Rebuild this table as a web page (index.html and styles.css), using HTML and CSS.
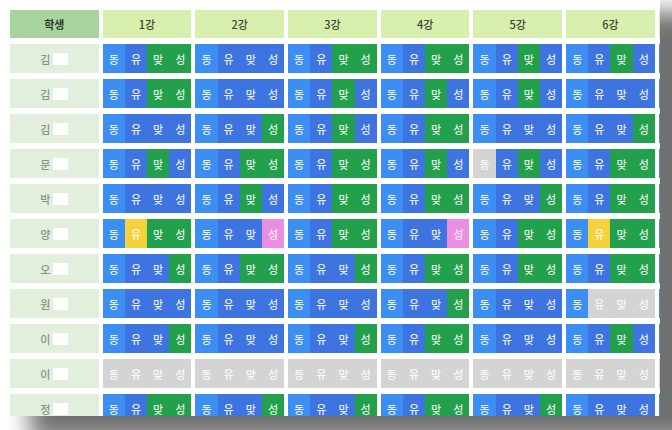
FILE: index.html
```html
<!DOCTYPE html>
<html lang="ko">
<head>
<meta charset="utf-8">
<title>출석</title>
<link rel="stylesheet" href="styles.css">
</head>
<body>
<div class="card">
<div class="grid">
<div class="hs">학생</div><div class="hl">1강</div><div class="hl">2강</div><div class="hl">3강</div><div class="hl">4강</div><div class="hl">5강</div><div class="hl">6강</div><div class="hl"></div>

<div class="nm">김<span class="mask"></span></div>
<div class="c"><i class="b1">동</i><i class="b">유</i><i class="g">맞</i><i class="g">성</i></div>
<div class="c"><i class="b1">동</i><i class="b">유</i><i class="b">맞</i><i class="b">성</i></div>
<div class="c"><i class="b1">동</i><i class="b">유</i><i class="g">맞</i><i class="g">성</i></div>
<div class="c"><i class="b1">동</i><i class="b">유</i><i class="g">맞</i><i class="g">성</i></div>
<div class="c"><i class="b1">동</i><i class="b">유</i><i class="g">맞</i><i class="b">성</i></div>
<div class="c"><i class="b1">동</i><i class="b">유</i><i class="g">맞</i><i class="b">성</i></div>
<div class="c"><i class="b1"></i><i class="b"></i><i class="b"></i><i class="b"></i></div>

<div class="nm">김<span class="mask"></span></div>
<div class="c"><i class="b1">동</i><i class="b">유</i><i class="g">맞</i><i class="g">성</i></div>
<div class="c"><i class="b1">동</i><i class="b">유</i><i class="b">맞</i><i class="b">성</i></div>
<div class="c"><i class="b1">동</i><i class="b">유</i><i class="g">맞</i><i class="b">성</i></div>
<div class="c"><i class="b1">동</i><i class="b">유</i><i class="g">맞</i><i class="b">성</i></div>
<div class="c"><i class="b1">동</i><i class="b">유</i><i class="g">맞</i><i class="b">성</i></div>
<div class="c"><i class="b1">동</i><i class="b">유</i><i class="b">맞</i><i class="b">성</i></div>
<div class="c"><i class="b1"></i><i class="b"></i><i class="b"></i><i class="b"></i></div>

<div class="nm">김<span class="mask"></span></div>
<div class="c"><i class="b1">동</i><i class="b">유</i><i class="b">맞</i><i class="b">성</i></div>
<div class="c"><i class="b1">동</i><i class="b">유</i><i class="b">맞</i><i class="g">성</i></div>
<div class="c"><i class="b1">동</i><i class="b">유</i><i class="g">맞</i><i class="b">성</i></div>
<div class="c"><i class="b1">동</i><i class="b">유</i><i class="g">맞</i><i class="g">성</i></div>
<div class="c"><i class="b1">동</i><i class="b">유</i><i class="b">맞</i><i class="b">성</i></div>
<div class="c"><i class="b1">동</i><i class="b">유</i><i class="b">맞</i><i class="g">성</i></div>
<div class="c"><i class="b1"></i><i class="b"></i><i class="b"></i><i class="b"></i></div>

<div class="nm">문<span class="mask"></span></div>
<div class="c"><i class="b1">동</i><i class="b">유</i><i class="g">맞</i><i class="b">성</i></div>
<div class="c"><i class="b1">동</i><i class="b">유</i><i class="g">맞</i><i class="g">성</i></div>
<div class="c"><i class="b1">동</i><i class="b">유</i><i class="g">맞</i><i class="g">성</i></div>
<div class="c"><i class="b1">동</i><i class="b">유</i><i class="g">맞</i><i class="b">성</i></div>
<div class="c"><i class="x">동</i><i class="b">유</i><i class="g">맞</i><i class="b">성</i></div>
<div class="c"><i class="b1">동</i><i class="b">유</i><i class="g">맞</i><i class="g">성</i></div>
<div class="c"><i class="b1"></i><i class="b"></i><i class="b"></i><i class="b"></i></div>

<div class="nm">박<span class="mask"></span></div>
<div class="c"><i class="b1">동</i><i class="b">유</i><i class="b">맞</i><i class="b">성</i></div>
<div class="c"><i class="b1">동</i><i class="b">유</i><i class="g">맞</i><i class="b">성</i></div>
<div class="c"><i class="b1">동</i><i class="b">유</i><i class="g">맞</i><i class="g">성</i></div>
<div class="c"><i class="b1">동</i><i class="b">유</i><i class="g">맞</i><i class="g">성</i></div>
<div class="c"><i class="b1">동</i><i class="b">유</i><i class="b">맞</i><i class="g">성</i></div>
<div class="c"><i class="b1">동</i><i class="b">유</i><i class="g">맞</i><i class="g">성</i></div>
<div class="c"><i class="b1"></i><i class="b"></i><i class="b"></i><i class="b"></i></div>

<div class="nm">양<span class="mask"></span></div>
<div class="c"><i class="b1">동</i><i class="y">유</i><i class="g">맞</i><i class="g">성</i></div>
<div class="c"><i class="b1">동</i><i class="b">유</i><i class="b">맞</i><i class="p">성</i></div>
<div class="c"><i class="b1">동</i><i class="b">유</i><i class="g">맞</i><i class="g">성</i></div>
<div class="c"><i class="b1">동</i><i class="b">유</i><i class="b">맞</i><i class="p">성</i></div>
<div class="c"><i class="b1">동</i><i class="b">유</i><i class="g">맞</i><i class="g">성</i></div>
<div class="c"><i class="b1">동</i><i class="y">유</i><i class="g">맞</i><i class="g">성</i></div>
<div class="c"><i class="b1"></i><i class="b"></i><i class="b"></i><i class="b"></i></div>

<div class="nm">오<span class="mask"></span></div>
<div class="c"><i class="b1">동</i><i class="b">유</i><i class="b">맞</i><i class="g">성</i></div>
<div class="c"><i class="b1">동</i><i class="b">유</i><i class="g">맞</i><i class="g">성</i></div>
<div class="c"><i class="b1">동</i><i class="b">유</i><i class="b">맞</i><i class="g">성</i></div>
<div class="c"><i class="b1">동</i><i class="b">유</i><i class="g">맞</i><i class="g">성</i></div>
<div class="c"><i class="b1">동</i><i class="b">유</i><i class="g">맞</i><i class="g">성</i></div>
<div class="c"><i class="b1">동</i><i class="b">유</i><i class="g">맞</i><i class="g">성</i></div>
<div class="c"><i class="b1"></i><i class="b"></i><i class="b"></i><i class="b"></i></div>

<div class="nm">원<span class="mask"></span></div>
<div class="c"><i class="b1">동</i><i class="b">유</i><i class="b">맞</i><i class="b">성</i></div>
<div class="c"><i class="b1">동</i><i class="b">유</i><i class="b">맞</i><i class="b">성</i></div>
<div class="c"><i class="b1">동</i><i class="b">유</i><i class="b">맞</i><i class="b">성</i></div>
<div class="c"><i class="b1">동</i><i class="b">유</i><i class="b">맞</i><i class="g">성</i></div>
<div class="c"><i class="b1">동</i><i class="b">유</i><i class="b">맞</i><i class="b">성</i></div>
<div class="c"><i class="b1">동</i><i class="x">유</i><i class="x">맞</i><i class="x">성</i></div>
<div class="c"><i class="b1"></i><i class="b"></i><i class="b"></i><i class="b"></i></div>

<div class="nm">이<span class="mask"></span></div>
<div class="c"><i class="b1">동</i><i class="b">유</i><i class="b">맞</i><i class="g">성</i></div>
<div class="c"><i class="b1">동</i><i class="b">유</i><i class="b">맞</i><i class="b">성</i></div>
<div class="c"><i class="b1">동</i><i class="b">유</i><i class="b">맞</i><i class="g">성</i></div>
<div class="c"><i class="b1">동</i><i class="b">유</i><i class="g">맞</i><i class="g">성</i></div>
<div class="c"><i class="b1">동</i><i class="b">유</i><i class="b">맞</i><i class="b">성</i></div>
<div class="c"><i class="b1">동</i><i class="b">유</i><i class="g">맞</i><i class="b">성</i></div>
<div class="c"><i class="b1"></i><i class="b"></i><i class="b"></i><i class="b"></i></div>

<div class="nm">이<span class="mask"></span></div>
<div class="c"><i class="x">동</i><i class="x">유</i><i class="x">맞</i><i class="x">성</i></div>
<div class="c"><i class="x">동</i><i class="x">유</i><i class="x">맞</i><i class="x">성</i></div>
<div class="c"><i class="x">동</i><i class="x">유</i><i class="x">맞</i><i class="x">성</i></div>
<div class="c"><i class="x">동</i><i class="x">유</i><i class="x">맞</i><i class="x">성</i></div>
<div class="c"><i class="x">동</i><i class="x">유</i><i class="x">맞</i><i class="x">성</i></div>
<div class="c"><i class="x">동</i><i class="x">유</i><i class="x">맞</i><i class="x">성</i></div>
<div class="c"><i class="x"></i><i class="x"></i><i class="x"></i><i class="x"></i></div>

<div class="nm">정<span class="mask"></span></div>
<div class="c"><i class="b1">동</i><i class="b">유</i><i class="g">맞</i><i class="g">성</i></div>
<div class="c"><i class="b1">동</i><i class="b">유</i><i class="b">맞</i><i class="g">성</i></div>
<div class="c"><i class="b1">동</i><i class="b">유</i><i class="b">맞</i><i class="g">성</i></div>
<div class="c"><i class="b1">동</i><i class="b">유</i><i class="g">맞</i><i class="g">성</i></div>
<div class="c"><i class="b1">동</i><i class="b">유</i><i class="b">맞</i><i class="g">성</i></div>
<div class="c"><i class="b1">동</i><i class="b">유</i><i class="b">맞</i><i class="b">성</i></div>
<div class="c"><i class="b1"></i><i class="b"></i><i class="b"></i><i class="b"></i></div>
</div>
</div>
</body>
</html>
```

FILE: styles.css
```css
* { box-sizing: border-box; margin: 0; padding: 0; }
html, body { width: 672px; height: 430px; overflow: hidden; background: #fff; }
body { font-family: "Noto Sans CJK KR", "Noto Sans", sans-serif; }

.card {
  width: 660px;
  height: 416px;
  background: #fff;
  box-shadow: 36px 18px 22px 6px rgba(0, 0, 0, 0.56);
  overflow: hidden;
  padding: 10px 0 0 10px;
}

.grid {
  display: grid;
  grid-template-columns: repeat(8, 88.7px);
  grid-template-rows: 28px;
  grid-auto-rows: 29px;
  column-gap: 4px;
  row-gap: 6px;
  width: max-content;
}

.hs, .hl, .nm {
  display: flex;
  align-items: center;
  justify-content: center;
  font-size: 11px;
}
.hs { background: #a9d4a0; color: #2e3a2c; font-weight: 700; }
.hl { background: #d8efae; color: #3d4436; font-weight: 500; }
.nm { background: #e2efdc; color: #8a8f88; font-weight: 500; }
.mask { display: inline-block; width: 15px; height: 12px; background: #fff; margin-left: 3px; }

.c { display: flex; }
.c i {
  flex: 1;
  display: flex;
  align-items: center;
  justify-content: center;
  font-style: normal;
  font-size: 11px;
  font-weight: 500;
  color: rgba(255, 255, 255, 0.88);
}
.c .b1 { background: #3c8ef2; }
.c .b { background: #3e74e0; }
.c .g { background: #23a04c; }
.c .y { background: #f5d23a; }
.c .p { background: #ea8fe0; }
.c .x { background: #d4d4d4; color: rgba(255, 255, 255, 0.9); }
```
